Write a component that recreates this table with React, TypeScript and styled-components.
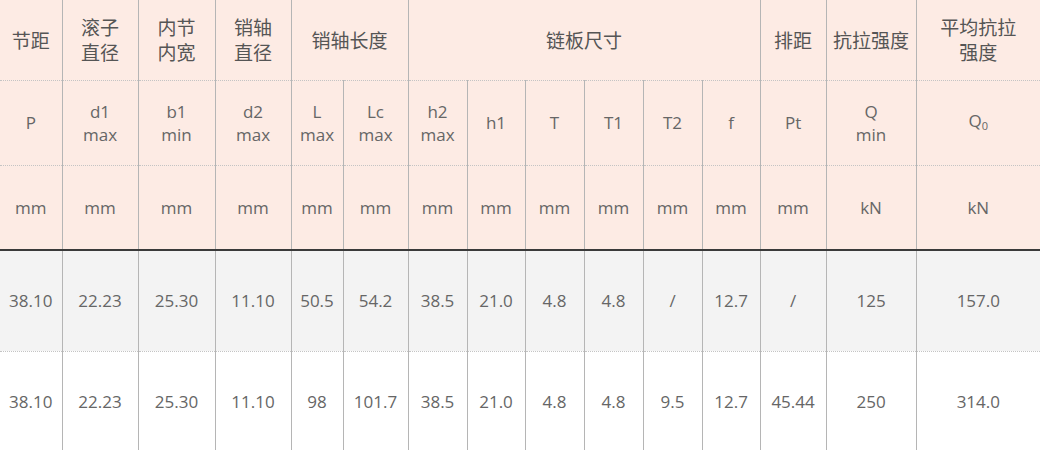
import React from 'react';
import styled, { createGlobalStyle } from 'styled-components';

const GlobalStyle = createGlobalStyle`
  html, body {
    margin: 0;
    padding: 0;
    background: #fff;
  }
`;

const Table = styled.table`
  width: 1040px;
  table-layout: fixed;
  border-collapse: collapse;
  font-family: 'Open Sans', 'Noto Sans CJK SC', sans-serif;
  font-size: 17px;
  color: #666;
  text-align: center;
`;

const Head = styled.thead`
  background: #fdebe4;
`;

const HeadRow = styled.tr<{ $h: number; $last?: boolean }>`
  height: ${p => p.$h}px;
  border-bottom: ${p => (p.$last ? '2px solid #3a3a3a' : '1px dotted #c4c4c4')};
`;

const BodyRow = styled.tr<{ $alt?: boolean }>`
  height: 101px;
  background: ${p => (p.$alt ? '#f3f3f3' : '#fff')};
  border-bottom: 1px dotted #c4c4c4;
`;

const Th = styled.th<{ $first?: boolean }>`
  font-weight: 400;
  padding: 0;
  line-height: 23px;
  vertical-align: middle;
  border-left: ${p => (p.$first ? 'none' : '1px solid #b5b5b5')};
`;

const Td = styled.td<{ $first?: boolean }>`
  padding: 0;
  vertical-align: middle;
  border-left: ${p => (p.$first ? 'none' : '1px solid #b5b5b5')};
`;

const Zh = styled.span`
  font-family: 'Noto Sans CJK SC', sans-serif;
  font-size: 19px;
  line-height: 25px;
  color: #555;
  display: inline-block;
`;

const Sub = styled.sub`
  font-size: 11px;
  vertical-align: -3px;
`;

const widths = [62, 76, 77, 76, 52, 65, 59, 58, 59, 59, 59, 58, 66, 90, 124];

const symbols: React.ReactNode[] = [
  'P',
  <>d1<br />max</>,
  <>b1<br />min</>,
  <>d2<br />max</>,
  <>L<br />max</>,
  <>Lc<br />max</>,
  <>h2<br />max</>,
  'h1',
  'T',
  'T1',
  'T2',
  'f',
  'Pt',
  <>Q<br />min</>,
  <>Q<Sub>0</Sub></>,
];

const units = ['mm', 'mm', 'mm', 'mm', 'mm', 'mm', 'mm', 'mm', 'mm', 'mm', 'mm', 'mm', 'mm', 'kN', 'kN'];

const rows = [
  ['38.10', '22.23', '25.30', '11.10', '50.5', '54.2', '38.5', '21.0', '4.8', '4.8', '/', '12.7', '/', '125', '157.0'],
  ['38.10', '22.23', '25.30', '11.10', '98', '101.7', '38.5', '21.0', '4.8', '4.8', '9.5', '12.7', '45.44', '250', '314.0'],
];

export default function App() {
  return (
    <>
      <GlobalStyle />
      <Table>
        <colgroup>
          {widths.map((w, i) => (
            <col key={i} style={{ width: w }} />
          ))}
        </colgroup>
        <Head>
          <HeadRow $h={80}>
            <Th $first><Zh>节距</Zh></Th>
            <Th><Zh>滚子<br />直径</Zh></Th>
            <Th><Zh>内节<br />内宽</Zh></Th>
            <Th><Zh>销轴<br />直径</Zh></Th>
            <Th colSpan={2}><Zh>销轴长度</Zh></Th>
            <Th colSpan={6}><Zh>链板尺寸</Zh></Th>
            <Th><Zh>排距</Zh></Th>
            <Th><Zh>抗拉强度</Zh></Th>
            <Th><Zh>平均抗拉<br />强度</Zh></Th>
          </HeadRow>
          <HeadRow $h={85}>
            {symbols.map((s, i) => (
              <Th key={i} $first={i === 0}>{s}</Th>
            ))}
          </HeadRow>
          <HeadRow $h={85} $last>
            {units.map((u, i) => (
              <Th key={i} $first={i === 0}>{u}</Th>
            ))}
          </HeadRow>
        </Head>
        <tbody>
          {rows.map((r, ri) => (
            <BodyRow key={ri} $alt={ri === 0}>
              {r.map((v, i) => (
                <Td key={i} $first={i === 0}>{v}</Td>
              ))}
            </BodyRow>
          ))}
        </tbody>
      </Table>
    </>
  );
}
